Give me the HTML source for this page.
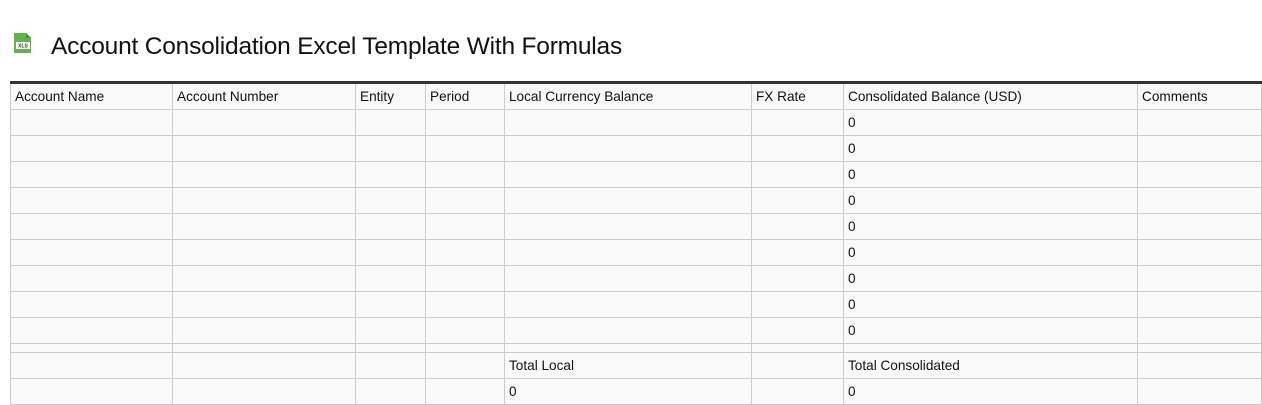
<!DOCTYPE html>
<html><head><meta charset="utf-8"><style>
body{margin:0;background:#fff;font-family:"Liberation Sans",sans-serif;width:1262px;height:405px;overflow:hidden;position:relative}
h1{position:absolute;left:51px;top:33px;margin:0;font-weight:normal;font-size:24.5px;color:#111;letter-spacing:-0.2px}
.ic{position:absolute;left:13px;top:32px}
table{position:absolute;left:10px;top:81px;width:1251px;border-collapse:collapse;border-top:3px solid #333;table-layout:fixed;font-size:13.6px;color:#111}
td{border:1px solid #ccc;background:#f9f9f9;height:26px;padding:0 0 0 4px;box-sizing:border-box;white-space:nowrap;overflow:hidden}
tr.h td{height:27px}
tr.s td{height:9px}
</style></head><body>
<svg class="ic" width="20" height="22" viewBox="0 0 20 22"><path d="M1 1h12l5 5v15H1z" fill="#5fb54a"/><path d="M13 1v5h5" fill="#3e8e2f"/><rect x="3" y="10" width="14" height="7" fill="#fff"/><text x="10" y="15.5" font-size="5" text-anchor="middle" font-family="Liberation Sans" font-weight="bold" fill="#333">XLS</text></svg>
<h1>Account Consolidation Excel Template With Formulas</h1>
<table>
<colgroup><col style="width:162px"><col style="width:183px"><col style="width:70px"><col style="width:79px"><col style="width:247px"><col style="width:92px"><col style="width:294px"><col style="width:124px"></colgroup>
<tr class="h"><td>Account Name</td><td>Account Number</td><td>Entity</td><td>Period</td><td>Local Currency Balance</td><td>FX Rate</td><td>Consolidated Balance (USD)</td><td>Comments</td></tr>
<tr><td></td><td></td><td></td><td></td><td></td><td></td><td>0</td><td></td></tr>
<tr><td></td><td></td><td></td><td></td><td></td><td></td><td>0</td><td></td></tr>
<tr><td></td><td></td><td></td><td></td><td></td><td></td><td>0</td><td></td></tr>
<tr><td></td><td></td><td></td><td></td><td></td><td></td><td>0</td><td></td></tr>
<tr><td></td><td></td><td></td><td></td><td></td><td></td><td>0</td><td></td></tr>
<tr><td></td><td></td><td></td><td></td><td></td><td></td><td>0</td><td></td></tr>
<tr><td></td><td></td><td></td><td></td><td></td><td></td><td>0</td><td></td></tr>
<tr><td></td><td></td><td></td><td></td><td></td><td></td><td>0</td><td></td></tr>
<tr><td></td><td></td><td></td><td></td><td></td><td></td><td>0</td><td></td></tr>
<tr class="s"><td></td><td></td><td></td><td></td><td></td><td></td><td></td><td></td></tr>
<tr><td></td><td></td><td></td><td></td><td>Total Local</td><td></td><td>Total Consolidated</td><td></td></tr>
<tr><td></td><td></td><td></td><td></td><td>0</td><td></td><td>0</td><td></td></tr>
</table>
</body></html>
